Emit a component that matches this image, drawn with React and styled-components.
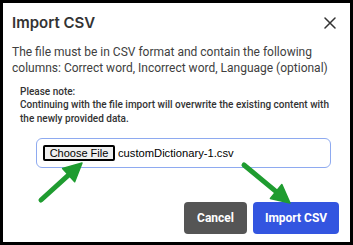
import React from "react";
import styled, { createGlobalStyle } from "styled-components";

const Global = createGlobalStyle`
  html, body { margin: 0; padding: 0; background: #000; }
  body { width: 353px; height: 245px; overflow: hidden; }
`;

const Frame = styled.div`
  position: relative;
  margin: 3px;
  width: 347px;
  height: 239px;
  background: #fff;
  box-sizing: border-box;
  padding: 0 9px 0 9px;
  font-family: Roboto, "Noto Sans", sans-serif;
  color: #333;
  display: flex;
  flex-direction: column;
`;

const Header = styled.div`
  display: flex;
  align-items: center;
  justify-content: space-between;
  padding-top: 9px;
  height: 22px;
`;

const Title = styled.h2`
  margin: 0;
  font-family: Inter, Roboto, sans-serif;
  font-size: 15px;
  font-weight: 600;
  color: #333;
  line-height: 22px;
`;

const Close = styled.button`
  border: 0;
  background: none;
  padding: 0;
  width: 12px;
  height: 12px;
  margin-right: 5px;
  display: flex;
  color: #333;
`;

const Body = styled.p`
  margin: 10px 0 0 0;
  font-size: 12px;
  line-height: 16px;
  color: #404040;
`;

const Note = styled.div`
  margin: 8.5px 0 0 8px;
  font-size: 10px;
  line-height: 13.5px;
  font-weight: 500;
  color: #333;
`;

const FileBox = styled.div`
  margin: 13px 0 0 24px;
  width: 295px;
  height: 30px;
  box-sizing: border-box;
  border: 1px solid #8eaaf0;
  border-radius: 6px;
  display: flex;
  align-items: center;
  padding-left: 6px;
  gap: 3px;
  font-family: "Liberation Sans", Arial, sans-serif;
  font-size: 11.2px;
  color: #000;
`;

const ChooseBtn = styled.span`
  display: inline-flex;
  align-items: center;
  justify-content: center;
  box-sizing: border-box;
  width: 72px;
  height: 16px;
  border: 2px solid #000;
  border-radius: 2px;
  background: #efefef;
  color: #000;
  font-size: 11px;
  white-space: nowrap;
`;

const Actions = styled.div`
  display: flex;
  justify-content: flex-end;
  gap: 6px;
  margin-top: 34px;
  padding-right: 2px;
`;

const Btn = styled.button`
  width: ${(p) => (p.$primary ? "86px" : "63px")};
  height: 32px;
  box-sizing: border-box;
  border: 0;
  border-radius: 4px;
  padding: 0;
  background: ${(p) => (p.$primary ? "#3355e0" : "#555555")};
  color: #fff;
  font-family: Roboto, sans-serif;
  font-weight: 700;
  font-size: 12px;
`;

const Overlay = styled.svg`
  position: absolute;
  left: -3px;
  top: -3px;
  width: 353px;
  height: 245px;
  pointer-events: none;
`;

function Arrow({ tail, tip }) {
  const dx = tip[0] - tail[0];
  const dy = tip[1] - tail[1];
  const len = Math.hypot(dx, dy);
  const ux = dx / len, uy = dy / len;
  const px = -uy, py = ux;
  const hl = 18, hw = 9;
  const bx = tip[0] - hl * ux, by = tip[1] - hl * uy;
  const pts = [
    [tip[0], tip[1]],
    [bx + hw * px, by + hw * py],
    [bx - hw * px, by - hw * py],
  ];
  return (
    <g>
      <line x1={tail[0]} y1={tail[1]} x2={bx + 2 * ux} y2={by + 2 * uy} stroke="#1f9c30" strokeWidth="5" strokeLinecap="round" />
      <polygon points={pts.map((p) => p.join(",")).join(" ")} fill="#1f9c30" stroke="#1f9c30" strokeWidth="1.5" strokeLinejoin="round" />
    </g>
  );
}

export default function App() {
  return (
    <>
      <Global />
      <Frame>
        <Header>
          <Title>Import CSV</Title>
          <Close aria-label="Close">
            <svg width="12" height="12" viewBox="0 0 12 12">
              <path d="M1 1L11 11M11 1L1 11" stroke="#333" strokeWidth="1.5" strokeLinecap="round" />
            </svg>
          </Close>
        </Header>
        <Body>
          The file must be in CSV format and contain the following columns: Correct word, Incorrect word, Language (optional)
        </Body>
        <Note>
          Please note:
          <br />
          Continuing with the file import will overwrite the existing content with the newly provided data.
        </Note>
        <FileBox>
          <ChooseBtn>Choose File</ChooseBtn>
          <span>customDictionary-1.csv</span>
        </FileBox>
        <Actions>
          <Btn>Cancel</Btn>
          <Btn $primary>Import CSV</Btn>
        </Actions>
        <Overlay viewBox="0 0 353 245">
          <Arrow tail={[41, 200]} tip={[82, 163]} />
          <Arrow tail={[244, 165]} tip={[290, 203]} />
        </Overlay>
      </Frame>
    </>
  );
}
